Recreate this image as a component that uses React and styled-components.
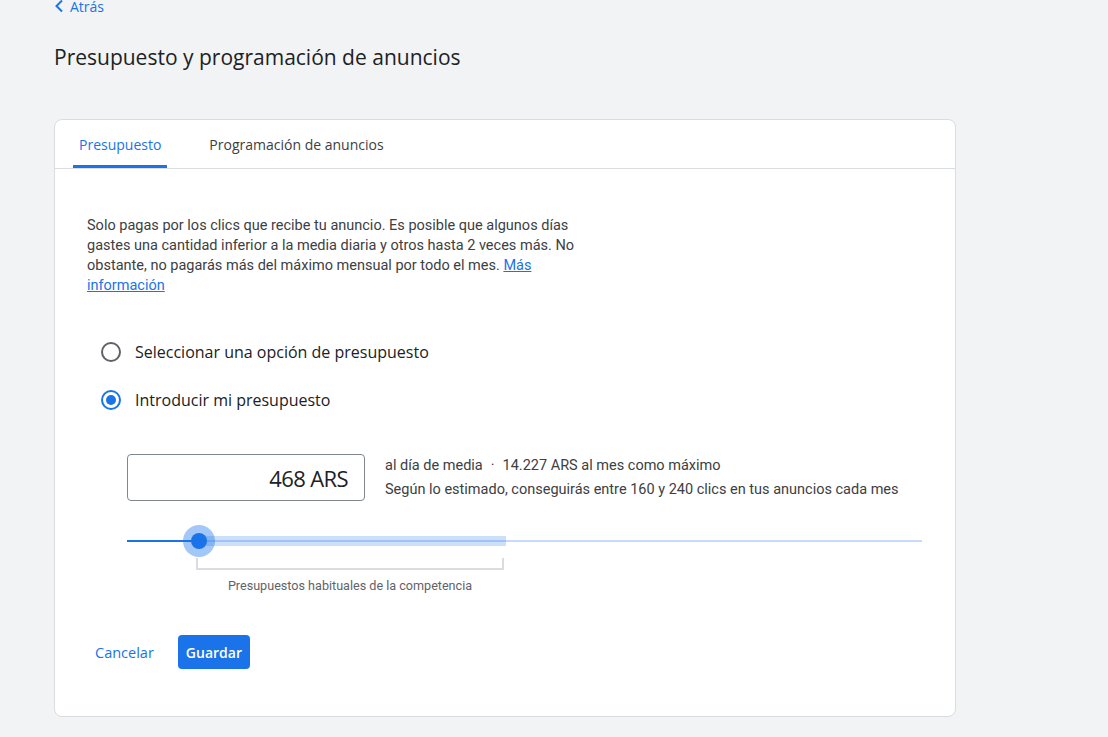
import styled, { createGlobalStyle } from 'styled-components';

const GlobalStyle = createGlobalStyle`
    body {
        margin: 0;
        background: #f1f3f4;
        font-family: Roboto, "Liberation Sans", sans-serif;
        color: #202124;
    }
`

const Page = styled.div`
    padding: 0 0 20px 54px;
`
const BackLink = styled.a`
    display: flex;
    align-items: center;
    gap: 6px;
    margin-top: -4px;
    height: 20px;
    color: #1a73e8;
    font-family: "Open Sans", sans-serif;
    font-size: 14px;
    font-weight: 500;
    text-decoration: none;
`
const Title = styled.h1`
    margin: 27px 0 0;
    font-family: "Open Sans", sans-serif;
    font-size: 21px;
    font-weight: 400;
    line-height: 28px;
    color: #202124;
`
const Card = styled.div`
    width: 900px;
    margin-top: 48px;
    background: #fff;
    border: 1px solid #dadce0;
    border-radius: 8px;
`
const TabBar = styled.div`
    display: flex;
    height: 48px;
    padding-left: 18px;
    gap: 36px;
    border-bottom: 1px solid #dadce0;
`
const Tab = styled.div`
    display: flex;
    align-items: center;
    padding: 0 6px;
    font-family: "Open Sans", sans-serif;
    font-size: 14px;
    font-weight: 500;
    color: ${p => (p.active ? '#1a73e8' : '#3c4043')};
    border-bottom: 3px solid ${p => (p.active ? '#1a73e8' : 'transparent')};
    border-top: 3px solid transparent;
    border-radius: 2px 2px 0 0;
`
const Body = styled.div`
    padding: 47px 32px 47px;
`
const Intro = styled.p`
    margin: 0;
    width: 505px;
    font-size: 14.5px;
    line-height: 20px;
    color: #3c4043;
    a {
        color: #1a73e8;
    }
`
const Options = styled.div`
    display: flex;
    flex-direction: column;
    margin-top: 32px;
    padding-left: 14px;
`
const Option = styled.label`
    display: flex;
    align-items: center;
    gap: 14px;
    height: 48px;
    font-family: "Open Sans", sans-serif;
    font-size: 16px;
    font-weight: 500;
    color: #202124;
`
const RadioCircle = styled.span`
    width: 16px;
    height: 16px;
    border-radius: 50%;
    border: 2px solid ${p => (p.checked ? '#1a73e8' : '#5f6368')};
    display: flex;
    align-items: center;
    justify-content: center;
    &::after {
        content: '';
        width: 10px;
        height: 10px;
        border-radius: 50%;
        background: ${p => (p.checked ? '#1a73e8' : 'transparent')};
    }
`
const Budget = styled.div`
    margin: 30px 0 0 40px;
`
const BudgetRow = styled.div`
    display: flex;
    align-items: center;
    gap: 20px;
`
const AmountBox = styled.div`
    width: 220px;
    height: 45px;
    padding: 0 16px 0 0;
    border: 1px solid #80868b;
    border-radius: 4px;
    display: flex;
    align-items: center;
    justify-content: flex-end;
    font-family: "Open Sans", sans-serif;
    font-size: 22px;
    color: #202124;
    letter-spacing: -0.6px;
`
const Details = styled.div`
    display: flex;
    flex-direction: column;
    gap: 4px;
    font-size: 14.5px;
    line-height: 20px;
    color: #3c4043;
`
const Dot = styled.span`
    margin: 0 8px;
`
const Slider = styled.div`
    position: relative;
    width: 795px;
    height: 32px;
    margin-top: 24px;
`
const Track = styled.div`
    position: absolute;
    left: 0;
    right: 0;
    top: 15px;
    height: 2px;
    background: #c6dafc;
`
const ActiveTrack = styled.div`
    position: absolute;
    left: 0;
    top: 15px;
    height: 2px;
    background: #1a73e8;
`
const Range = styled.div`
    position: absolute;
    top: 11px;
    height: 10px;
    background: rgba(26, 115, 232, 0.22);
`
const Thumb = styled.div`
    position: absolute;
    top: 0;
    width: 32px;
    height: 32px;
    margin-left: -16px;
    border-radius: 50%;
    background: rgba(26, 115, 232, 0.4);
    display: flex;
    align-items: center;
    justify-content: center;
    &::after {
        content: '';
        width: 16px;
        height: 16px;
        border-radius: 50%;
        background: #1a73e8;
    }
`
const Bracket = styled.div`
    margin: 1px 0 0 69px;
    width: 304px;
    height: 10px;
    border: 2px solid #dadce0;
    border-top: none;
`
const Caption = styled.div`
    width: 308px;
    margin: 8px 0 0 69px;
    text-align: center;
    font-size: 12.6px;
    line-height: 16px;
    color: #5f6368;
`
const Actions = styled.div`
    display: flex;
    align-items: center;
    gap: 8px;
    margin-top: 41px;
`
const TextButton = styled.button`
    height: 34px;
    padding: 0 8px;
    border: none;
    background: none;
    color: #1a73e8;
    font-family: "Open Sans", sans-serif;
    font-size: 14.5px;
    font-weight: 500;
`
const PrimaryButton = styled.button`
    height: 34px;
    padding: 0 8px;
    margin-left: 8px;
    border: none;
    border-radius: 4px;
    background: #1a73e8;
    color: #fff;
    font-family: "Open Sans", sans-serif;
    font-size: 14px;
    font-weight: 600;
`

const thumbPos = 72;
const rangeEnd = 379;

const App = () => {
    return (
        <>
            <GlobalStyle />
            <Page>
                <BackLink href="#">
                    <svg width="10" height="14" viewBox="0 0 10 14">
                        <path d="M8 1.5 2.5 7 8 12.5" fill="none" stroke="#1a73e8" strokeWidth="2" />
                    </svg>
                    Atrás
                </BackLink>
                <Title>Presupuesto y programación de anuncios</Title>
                <Card>
                    <TabBar>
                        <Tab active>Presupuesto</Tab>
                        <Tab>Programación de anuncios</Tab>
                    </TabBar>
                    <Body>
                        <Intro>
                            Solo pagas por los clics que recibe tu anuncio. Es posible que algunos días
                            gastes una cantidad inferior a la media diaria y otros hasta 2 veces más. No
                            obstante, no pagarás más del máximo mensual por todo el mes. <a href="#">Más información</a>
                        </Intro>
                        <Options>
                            <Option>
                                <RadioCircle />
                                Seleccionar una opción de presupuesto
                            </Option>
                            <Option>
                                <RadioCircle checked />
                                Introducir mi presupuesto
                            </Option>
                        </Options>
                        <Budget>
                            <BudgetRow>
                                <AmountBox>468 ARS</AmountBox>
                                <Details>
                                    <div>al día de media<Dot>·</Dot>14.227 ARS al mes como máximo</div>
                                    <div>Según lo estimado, conseguirás entre 160 y 240 clics en tus anuncios cada mes</div>
                                </Details>
                            </BudgetRow>
                            <Slider>
                                <Track />
                                <Range style={{ left: thumbPos, width: rangeEnd - thumbPos }} />
                                <ActiveTrack style={{ width: thumbPos }} />
                                <Thumb style={{ left: thumbPos }} />
                            </Slider>
                            <Bracket />
                            <Caption>Presupuestos habituales de la competencia</Caption>
                        </Budget>
                        <Actions>
                            <TextButton>Cancelar</TextButton>
                            <PrimaryButton>Guardar</PrimaryButton>
                        </Actions>
                    </Body>
                </Card>
            </Page>
        </>
    );
};

export default App;
